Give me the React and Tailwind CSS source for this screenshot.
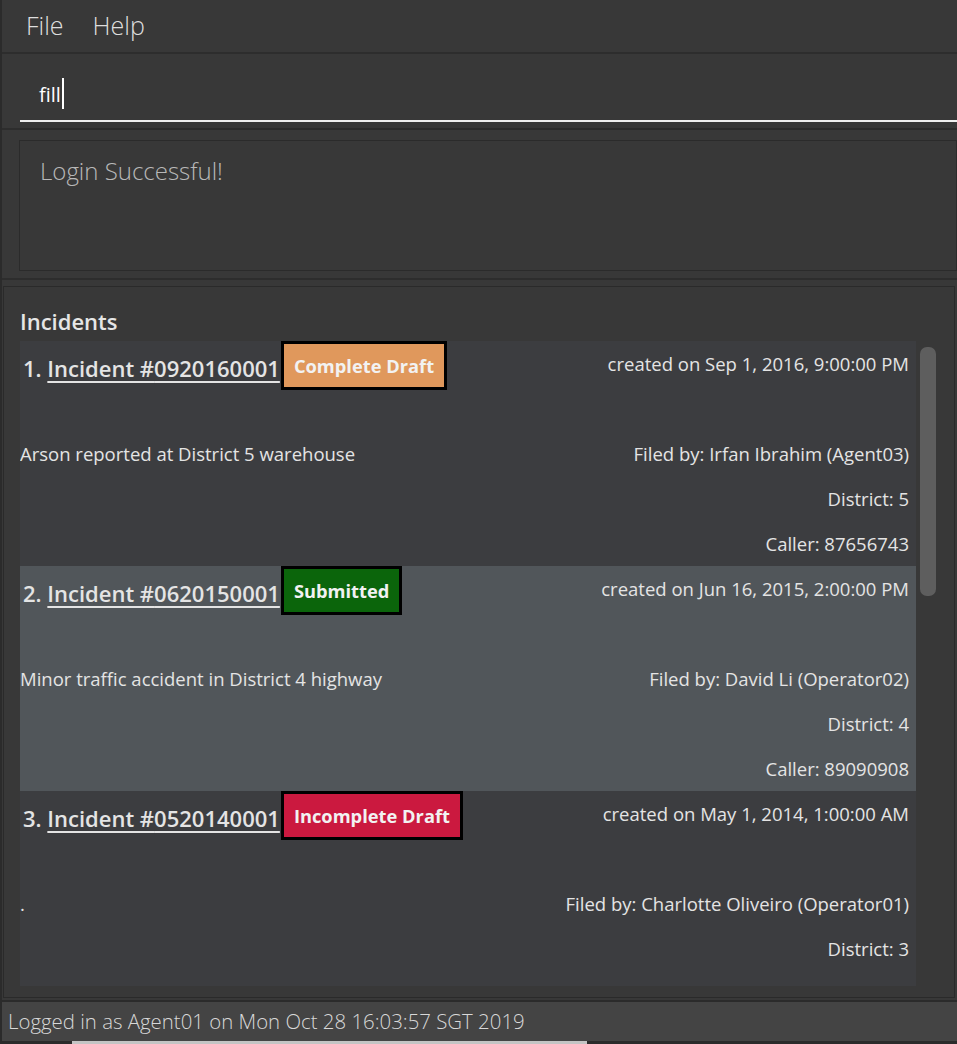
const incidents = [
  {
    no: 1,
    id: "0920160001",
    status: "Complete Draft",
    badge: "bg-[#e0985c]",
    created: "created on Sep 1, 2016, 9:00:00 PM",
    desc: "Arson reported at District 5 warehouse",
    filedBy: "Filed by: Irfan Ibrahim (Agent03)",
    district: "District: 5",
    caller: "Caller: 87656743",
  },
  {
    no: 2,
    id: "0620150001",
    status: "Submitted",
    badge: "bg-[#0b650b]",
    created: "created on Jun 16, 2015, 2:00:00 PM",
    desc: "Minor traffic accident in District 4 highway",
    filedBy: "Filed by: David Li (Operator02)",
    district: "District: 4",
    caller: "Caller: 89090908",
    selected: true,
  },
  {
    no: 3,
    id: "0520140001",
    status: "Incomplete Draft",
    badge: "bg-[#cb193f]",
    created: "created on May 1, 2014, 1:00:00 AM",
    desc: ".",
    filedBy: "Filed by: Charlotte Oliveiro (Operator01)",
    district: "District: 3",
    caller: "Caller: 87595040",
  },
];

function IncidentCard({ item }) {
  return (
    <div
      className={`flex h-[225px] shrink-0 justify-between pr-[7px] text-[#e4e4e4] ${
        item.selected ? "bg-[#51565a]" : "bg-[#3c3d40]"
      }`}
    >
      <div className="flex flex-col">
        <div className="flex h-[49px] items-center pl-[3px]">
          <span className="pt-[5px] text-[22px] font-semibold leading-none">
            {item.no}.{" "}
            <span className="underline decoration-[2px] underline-offset-[4px]">
              Incident #{item.id}
            </span>
          </span>
          <span
            className={`ml-[1px] flex h-[49px] items-center border-[3px] border-black px-[10px] text-[18.3px] font-bold text-[#f2f2f2] ${item.badge}`}
          >
            {item.status}
          </span>
        </div>
        <div className="mt-[41px] flex h-[45px] items-center text-[18.5px]">
          {item.desc}
        </div>
      </div>
      <div className="flex flex-col items-end text-[18.5px]">
        <div className="flex h-[45px] items-center">{item.created}</div>
        <div className="h-[45px]" />
        <div className="flex h-[45px] items-center">{item.filedBy}</div>
        <div className="flex h-[45px] items-center">{item.district}</div>
        <div className="flex h-[45px] items-center">{item.caller}</div>
      </div>
    </div>
  );
}

export default function App() {
  return (
    <div
      className="flex h-[1044px] w-full flex-col overflow-hidden border-l-2 border-[#2b2b2b] bg-[#383838]"
      style={{ fontFamily: '"Open Sans", "Noto Sans", sans-serif' }}
    >
      {/* menu */}
      <div className="flex h-[54px] shrink-0 items-center gap-[29px] border-b-2 border-[#2d2d2d] pl-[24px] text-[25px] font-light text-[#dedede]">
        <span>File</span>
        <span>Help</span>
      </div>

      {/* command box */}
      <div className="flex h-[76px] shrink-0 flex-col border-b-2 border-[#2d2d2d] pl-[18px]">
        <div className="flex h-[66px] items-end pb-[10px] pl-[19px]">
          <span className="text-[20px] leading-[30px] text-white">fill</span>
          <span className="mb-[1px] ml-[1px] h-[31px] w-[2px] bg-white" />
        </div>
        <div className="h-[2px] bg-[#f0f0f0]" />
      </div>

      {/* result display */}
      <div className="h-[150px] shrink-0 border-b-2 border-[#2d2d2d] pt-[10px] pl-[17px]">
        <div className="h-[131px] border border-[#2b2b2b] pl-[20px] pt-[12px] text-[24px] font-light text-[#b8b8b8]">
          Login Successful!
        </div>
      </div>

      {/* incidents panel */}
      <div className="flex-1 pt-[6px] pr-[2px] pl-[1px]">
        <div className="flex h-[712px] flex-col border border-[#2a2a2a] pl-[16px]">
          <div className="mt-[22px] mb-[8px] text-[22px] font-semibold leading-[24px] text-[#e6e6e6]">
            Incidents
          </div>
          <div className="flex h-[645px] overflow-hidden">
            <div className="flex w-[896px] flex-col">
              {incidents.map((it) => (
                <IncidentCard key={it.id} item={it} />
              ))}
            </div>
            <div className="ml-[4px] w-[16px] pt-[6px]">
              <div className="h-[249px] rounded-[7px] bg-[#5e5e5e]" />
            </div>
          </div>
        </div>
      </div>

      {/* status bar */}
      <div className="flex h-[41px] shrink-0 items-center border-t-2 border-[#2b2b2b] bg-[#444444] pl-[6px] text-[20.4px] font-light text-[#d8d8d8]">
        Logged in as Agent01 on Mon Oct 28 16:03:57 SGT 2019
      </div>
      <div className="flex h-[3px] shrink-0">
        <div className="w-[70px] bg-[#2b2b2b]" />
        <div className="w-[515px] bg-[#c4c4c4]" />
        <div className="flex-1 bg-[#2b2b2b]" />
      </div>
    </div>
  );
}
